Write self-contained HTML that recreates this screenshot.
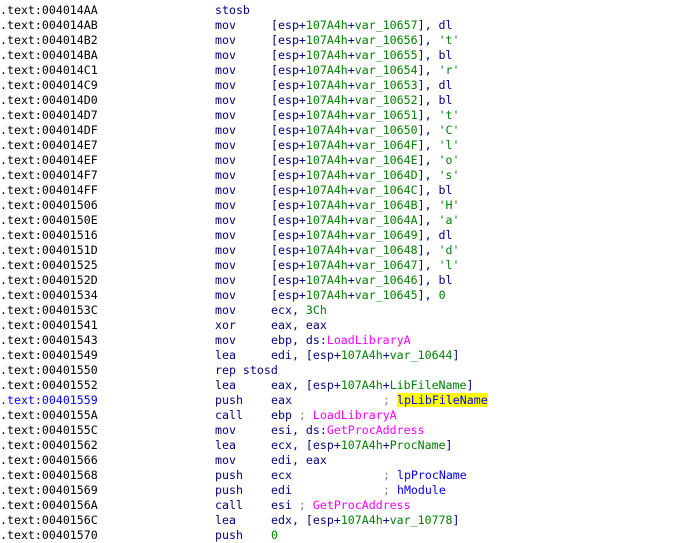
<html><head><style>
body{margin:0;background:#fff;width:676px;height:534px;overflow:hidden;font-family:"DejaVu Sans Mono","Liberation Mono",monospace;font-size:11.6px;}
.l{position:absolute;left:0;height:15px;line-height:15px;white-space:pre;}
.a{position:absolute;left:0;color:#000;}
.m{position:absolute;left:215px;color:#000080;}
.o{position:absolute;left:271px;color:#000080;}
.c{position:absolute;left:383px;color:#808080;}
.g{color:#008000}.p{color:#ff00ff}.b{color:#0000ff}.k{color:#808080}
.h{background:#ffff00;color:#0000ff}
</style></head><body>
<div id="r"></div>
<script>
const L=[
["004014AA","stosb",""],
["004014AB","mov","[esp+<g>107A4h</g>+<g>var_10657</g>], dl"],
["004014B2","mov","[esp+<g>107A4h</g>+<g>var_10656</g>], <g>'t'</g>"],
["004014BA","mov","[esp+<g>107A4h</g>+<g>var_10655</g>], bl"],
["004014C1","mov","[esp+<g>107A4h</g>+<g>var_10654</g>], <g>'r'</g>"],
["004014C9","mov","[esp+<g>107A4h</g>+<g>var_10653</g>], dl"],
["004014D0","mov","[esp+<g>107A4h</g>+<g>var_10652</g>], bl"],
["004014D7","mov","[esp+<g>107A4h</g>+<g>var_10651</g>], <g>'t'</g>"],
["004014DF","mov","[esp+<g>107A4h</g>+<g>var_10650</g>], <g>'C'</g>"],
["004014E7","mov","[esp+<g>107A4h</g>+<g>var_1064F</g>], <g>'l'</g>"],
["004014EF","mov","[esp+<g>107A4h</g>+<g>var_1064E</g>], <g>'o'</g>"],
["004014F7","mov","[esp+<g>107A4h</g>+<g>var_1064D</g>], <g>'s'</g>"],
["004014FF","mov","[esp+<g>107A4h</g>+<g>var_1064C</g>], bl"],
["00401506","mov","[esp+<g>107A4h</g>+<g>var_1064B</g>], <g>'H'</g>"],
["0040150E","mov","[esp+<g>107A4h</g>+<g>var_1064A</g>], <g>'a'</g>"],
["00401516","mov","[esp+<g>107A4h</g>+<g>var_10649</g>], dl"],
["0040151D","mov","[esp+<g>107A4h</g>+<g>var_10648</g>], <g>'d'</g>"],
["00401525","mov","[esp+<g>107A4h</g>+<g>var_10647</g>], <g>'l'</g>"],
["0040152D","mov","[esp+<g>107A4h</g>+<g>var_10646</g>], bl"],
["00401534","mov","[esp+<g>107A4h</g>+<g>var_10645</g>], <g>0</g>"],
["0040153C","mov","ecx, <g>3Ch</g>"],
["00401541","xor","eax, eax"],
["00401543","mov","ebp, ds:<p>LoadLibraryA</p>"],
["00401549","lea","edi, [esp+<g>107A4h</g>+<g>var_10644</g>]"],
["00401550","rep stosd",""],
["00401552","lea","eax, [esp+<g>107A4h</g>+<g>LibFileName</g>]"],
["00401559","push","eax","<h>lpLibFileName</h>",1],
["0040155A","call","ebp <k>;</k> <p>LoadLibraryA</p>"],
["0040155C","mov","esi, ds:<p>GetProcAddress</p>"],
["00401562","lea","ecx, [esp+<g>107A4h</g>+<g>ProcName</g>]"],
["00401566","mov","edi, eax"],
["00401568","push","ecx","lpProcName"],
["00401569","push","edi","hModule"],
["0040156A","call","esi <k>;</k> <p>GetProcAddress</p>"],
["0040156C","lea","edx, [esp+<g>107A4h</g>+<g>var_10778</g>]"],
["00401570","push","<g>0</g>"]];
const f=s=>s.replace(/<(\w)>/g,'<span class="$1">').replace(/<\/\w>/g,'</span>');
let h='';
L.forEach((x,i)=>{
 h+=`<div class="l" style="top:${3+i*15}px"><span class="a"${x[4]?' style="color:#0000ff"':''}>.text:${x[0]}</span><span class="m">${x[1]}</span><span class="o">${f(x[2])}</span>`;
 if(x[3])h+=`<span class="c">; <span class="${x[3].startsWith('<h>')?'':'b'}">${f(x[3])}</span></span>`;
 h+='</div>';
});
document.getElementById('r').innerHTML=h;
</script>
</body></html>
